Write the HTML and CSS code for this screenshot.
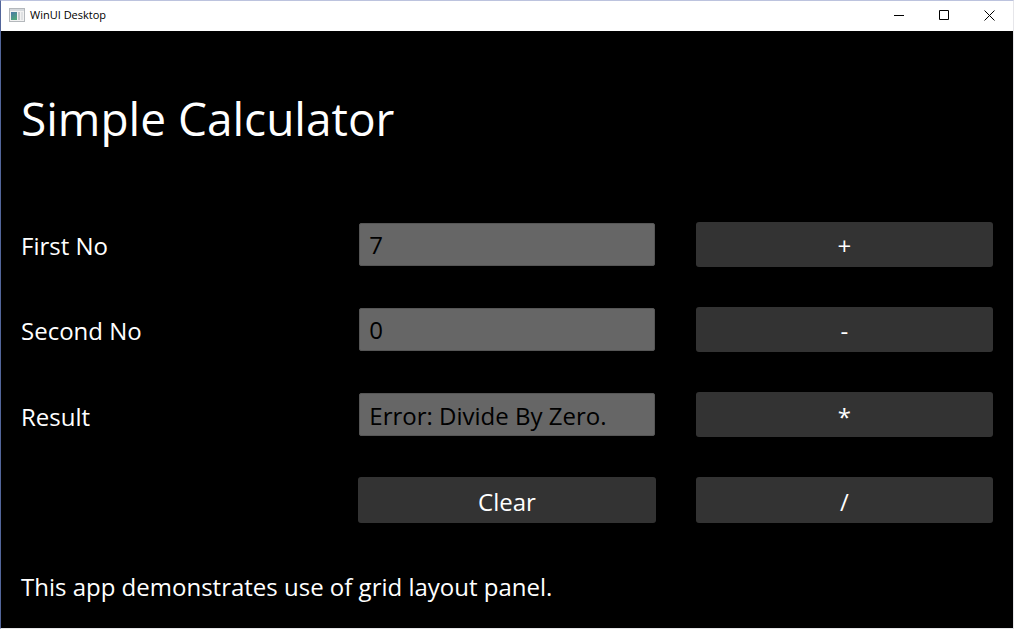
FILE: index.html
```html
<!DOCTYPE html>
<html lang="en">
<head>
<meta charset="utf-8">
<title>WinUI Desktop</title>
<link rel="stylesheet" href="styles.css">
</head>
<body>
<div class="window">
  <header class="titlebar">
    <svg class="app-icon" width="16" height="14" viewBox="0 0 16 14" aria-hidden="true">
      <defs>
        <linearGradient id="pane" x1="0" y1="0" x2="0.5" y2="1">
          <stop offset="0" stop-color="#4a78a8"/>
          <stop offset="1" stop-color="#4fa67c"/>
        </linearGradient>
      </defs>
      <rect x="0.5" y="0.5" width="15" height="13" fill="#f2f2f2" stroke="#b4b8bc"/>
      <rect x="1" y="1" width="14" height="2" fill="#d5d9dd"/>
      <rect x="2" y="4" width="6" height="8" fill="url(#pane)"/>
      <rect x="9" y="4" width="2" height="8" fill="#c5c9cc"/>
      <rect x="12" y="4" width="2" height="8" fill="#dfe1e3"/>
    </svg>
    <span class="window-title">WinUI Desktop</span>
    <div class="window-controls">
      <button class="control" type="button" aria-label="Minimize">
        <svg width="11" height="11" viewBox="0 0 11 11"><path d="M0 5.5h10" stroke="#000" fill="none"/></svg>
      </button>
      <button class="control" type="button" aria-label="Maximize">
        <svg width="11" height="11" viewBox="0 0 11 11"><path d="M.5.5h9v9h-9z" stroke="#000" fill="none"/></svg>
      </button>
      <button class="control" type="button" aria-label="Close">
        <svg width="11" height="11" viewBox="0 0 11 11"><path d="M.5.5l10 10M10.5.5l-10 10" stroke="#000" fill="none"/></svg>
      </button>
    </div>
  </header>
  <main class="calculator">
    <h1 class="heading">Simple Calculator</h1>

    <label class="label" for="first">First No</label>
    <input class="field" id="first" type="text" value="7">
    <button class="button" type="button">+</button>

    <label class="label" for="second">Second No</label>
    <input class="field" id="second" type="text" value="0">
    <button class="button" type="button">-</button>

    <label class="label" for="result">Result</label>
    <input class="field" id="result" type="text" value="Error: Divide By Zero." readonly>
    <button class="button" type="button">*</button>

    <button class="button clear" type="button">Clear</button>
    <button class="button" type="button">/</button>

    <p class="note">This app demonstrates use of grid layout panel.</p>
  </main>
</div>
</body>
</html>
```
FILE: styles.css
```css
* {
  box-sizing: border-box;
}

body {
  margin: 0;
  font-family: "Segoe UI", "Open Sans", "Noto Sans", sans-serif;
}

.window {
  display: flex;
  flex-direction: column;
  min-height: 100vh;
  border: 1px solid #e6e6ea;
  border-top-color: #bcc3de;
  border-left-color: #52659a;
}

.titlebar {
  display: flex;
  align-items: center;
  height: 30px;
  padding: 0 1px 2px 8px;
  background: #fff;
  color: #000;
}

.window-title {
  margin-left: 5px;
  font-size: 11px;
  line-height: 16px;
}

.window-controls {
  display: flex;
  align-self: stretch;
  margin-left: auto;
}

.control {
  display: flex;
  align-items: center;
  justify-content: center;
  width: 45px;
  padding: 0;
  border: 0;
  background: transparent;
}

.calculator {
  flex: 1;
  display: grid;
  grid-template-columns: repeat(3, minmax(0, 1fr));
  grid-template-rows: repeat(7, 1fr);
  background: #000;
  color: #fff;
  font-size: 24px;
  line-height: 32px;
}

.heading {
  grid-column: 1 / -1;
  grid-row: span 2;
  align-self: center;
  margin: 0 20px;
  padding-top: 4px;
  font-size: 46px;
  line-height: 64px;
  font-weight: 400;
}

.label,
.note {
  align-self: center;
  margin: 0 20px;
  padding-top: 4px;
}

.note {
  grid-column: 1 / -1;
}

.field {
  min-width: 0;
  margin: 21px;
  padding: 2px 9px 0;
  border: 1px solid #565656;
  border-radius: 2px;
  background: #666;
  color: #000;
  font: inherit;
}

.button {
  margin: 20px;
  padding: 4px 0 0;
  border: 0;
  border-radius: 3px;
  background: #333;
  color: #fff;
  font: inherit;
}

.clear {
  grid-column: 2;
}
```
